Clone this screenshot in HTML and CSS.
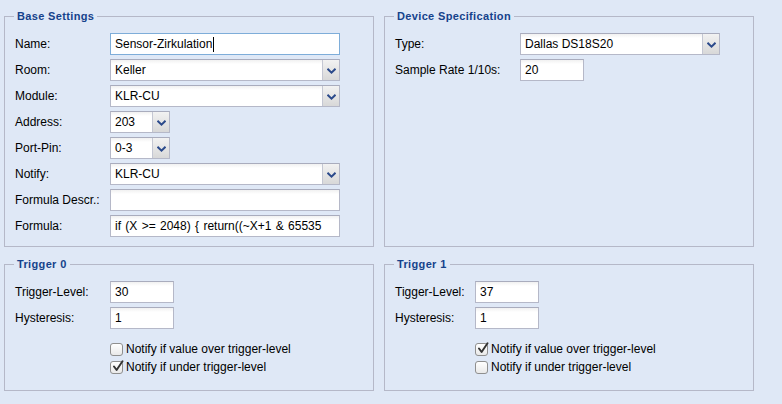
FILE: index.html
```html
<!DOCTYPE html>
<html>
<head>
<meta charset="utf-8">
<link rel="stylesheet" href="styles.css">
</head>
<body>
<div class="page">
  <fieldset class="panel">
    <legend>Base Settings</legend>
    <div class="rows">
      <div class="row"><span class="lbl w95">Name:</span><div class="field focus w230">Sensor-Zirkulation<span class="caret"></span></div></div>
      <div class="row"><span class="lbl w95">Room:</span><div class="combo w230"><span class="val">Keller</span><span class="trig"><svg width="9" height="6" viewBox="0 0 9 6"><path d="M0.5 0.8 L4.5 4.6 L8.5 0.8" fill="none" stroke="#2b4a8b" stroke-width="2"/></svg></span></div></div>
      <div class="row"><span class="lbl w95">Module:</span><div class="combo w230"><span class="val">KLR-CU</span><span class="trig"><svg width="9" height="6" viewBox="0 0 9 6"><path d="M0.5 0.8 L4.5 4.6 L8.5 0.8" fill="none" stroke="#2b4a8b" stroke-width="2"/></svg></span></div></div>
      <div class="row"><span class="lbl w95">Address:</span><div class="combo w60"><span class="val">203</span><span class="trig"><svg width="9" height="6" viewBox="0 0 9 6"><path d="M0.5 0.8 L4.5 4.6 L8.5 0.8" fill="none" stroke="#2b4a8b" stroke-width="2"/></svg></span></div></div>
      <div class="row"><span class="lbl w95">Port-Pin:</span><div class="combo w60"><span class="val">0-3</span><span class="trig"><svg width="9" height="6" viewBox="0 0 9 6"><path d="M0.5 0.8 L4.5 4.6 L8.5 0.8" fill="none" stroke="#2b4a8b" stroke-width="2"/></svg></span></div></div>
      <div class="row"><span class="lbl w95">Notify:</span><div class="combo w230"><span class="val">KLR-CU</span><span class="trig"><svg width="9" height="6" viewBox="0 0 9 6"><path d="M0.5 0.8 L4.5 4.6 L8.5 0.8" fill="none" stroke="#2b4a8b" stroke-width="2"/></svg></span></div></div>
      <div class="row"><span class="lbl w95">Formula Descr.:</span><div class="field w230"></div></div>
      <div class="row"><span class="lbl w95">Formula:</span><div class="field w230">if (X &gt;= 2048) { return((~X+1 &amp; 65535</div></div>
    </div>
  </fieldset>

  <fieldset class="panel">
    <legend>Device Specification</legend>
    <div class="rows">
      <div class="row"><span class="lbl w125">Type:</span><div class="combo w200"><span class="val">Dallas DS18S20</span><span class="trig"><svg width="9" height="6" viewBox="0 0 9 6"><path d="M0.5 0.8 L4.5 4.6 L8.5 0.8" fill="none" stroke="#2b4a8b" stroke-width="2"/></svg></span></div></div>
      <div class="row"><span class="lbl w125">Sample Rate 1/10s:</span><div class="field w64">20</div></div>
    </div>
  </fieldset>

  <fieldset class="panel trigger">
    <legend>Trigger 0</legend>
    <div class="rows">
      <div class="row"><span class="lbl w95">Trigger-Level:</span><div class="field w64">30</div></div>
      <div class="row"><span class="lbl w95">Hysteresis:</span><div class="field w64">1</div></div>
      <div class="check first off95"><span class="box"></span><span>Notify if value over trigger-level</span></div>
      <div class="check off95"><span class="box"><svg width="13" height="13" viewBox="0 0 13 13"><path d="M3 6.5 L5.6 10 L11.5 1.2" fill="none" stroke="#333" stroke-width="1.9" stroke-linecap="round" stroke-linejoin="round"/></svg></span><span>Notify if under trigger-level</span></div>
    </div>
  </fieldset>

  <fieldset class="panel trigger">
    <legend>Trigger 1</legend>
    <div class="rows">
      <div class="row"><span class="lbl w80">Tigger-Level:</span><div class="field w64">37</div></div>
      <div class="row"><span class="lbl w80">Hysteresis:</span><div class="field w64">1</div></div>
      <div class="check first off80"><span class="box"><svg width="13" height="13" viewBox="0 0 13 13"><path d="M3 6.5 L5.6 10 L11.5 1.2" fill="none" stroke="#333" stroke-width="1.9" stroke-linecap="round" stroke-linejoin="round"/></svg></span><span>Notify if value over trigger-level</span></div>
      <div class="check off80"><span class="box"></span><span>Notify if under trigger-level</span></div>
    </div>
  </fieldset>
</div>
</body>
</html>
```

FILE: styles.css
```css
html, body {
  margin: 0;
  padding: 0;
  background: #dfe8f6;
}
body {
  font-family: "Liberation Sans", Arial, sans-serif;
  font-size: 12px;
  color: #000;
}
.page {
  display: grid;
  grid-template-columns: 370px 370px;
  column-gap: 10px;
  row-gap: 11px;
  padding: 10px 0 0 4px;
}
.panel {
  margin: 0;
  min-width: 0;
  border: 1px solid #b5b8c8;
  padding: 11px 10px 9px 9px;
}
.panel legend {
  padding: 0 3px;
  margin-left: 0;
  font-weight: bold;
  font-size: 11px;
  line-height: 12px;
  letter-spacing: 0.35px;
  color: #15428b;
}
.trigger {
  padding-bottom: 14px;
}
.rows {
  display: flex;
  flex-direction: column;
  gap: 4px;
}
.row {
  display: flex;
  align-items: center;
  height: 22px;
  padding-left: 1px;
}
.lbl { flex: none; }
.w95 { width: 95px; }
.w125 { width: 125px; }
.w80 { width: 80px; }
.w230 { width: 230px; }
.w200 { width: 200px; }
.w60 { width: 60px; }
.w64 { width: 64px; }
.field, .combo {
  box-sizing: border-box;
  height: 22px;
  border: 1px solid #b5b8c8;
  border-top-color: #a9acbd;
  background: #fff linear-gradient(#f1f1f1, #fff 4px);
  display: flex;
  align-items: center;
  padding-left: 4px;
  white-space: nowrap;
  overflow: hidden;
}
.field {
  word-spacing: 1px;
}
.field.focus {
  border-color: #7eadd9;
  background: #fff;
}
.caret {
  display: inline-block;
  width: 1px;
  height: 15px;
  background: #000;
  margin-left: 1px;
}
.combo {
  padding-right: 0;
}
.combo .val {
  flex: 1;
}
.trig {
  flex: none;
  width: 17px;
  height: 20px;
  box-sizing: border-box;
  border-left: 1px solid #c4c7d3;
  background: linear-gradient(#f2f2f2, #d8d8d8);
  display: flex;
  align-items: center;
  justify-content: center;
}
.trig svg { display: block; margin-top: 1px; }
.check {
  display: flex;
  align-items: center;
  height: 18px;
  gap: 3px;
}
.check.first { margin-top: 7px; }
.rows .check + .check { margin-top: -4px; }
.off95 { padding-left: 96px; }
.off80 { padding-left: 81px; }
.box {
  box-sizing: border-box;
  width: 13px;
  height: 13px;
  border: 1px solid #8f8f8f;
  border-radius: 3px;
  background: linear-gradient(#ffffff, #e9e9e9);
  position: relative;
}
.box svg {
  position: absolute;
  left: 0;
  top: -2px;
}
```
